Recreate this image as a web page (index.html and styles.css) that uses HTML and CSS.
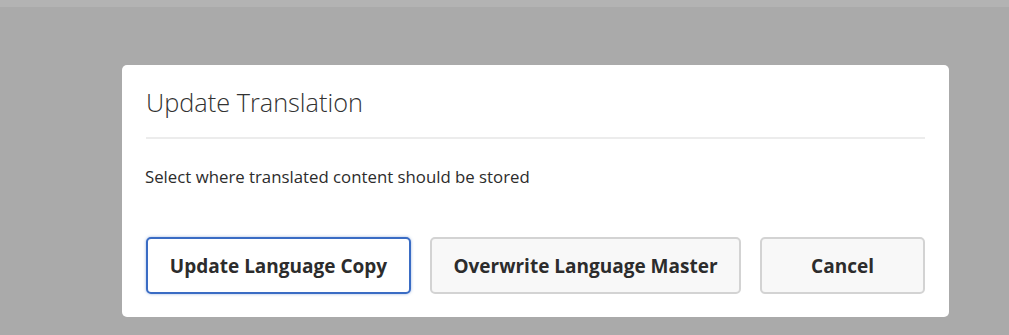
FILE: index.html
```html
<!DOCTYPE html>
<html lang="en">
<head>
    <meta charset="UTF-8">
    <meta name="viewport" content="width=device-width, initial-scale=1.0">
    <title>Update Translation</title>
    <link rel="stylesheet" href="styles.css">
</head>
<body>
    <div class="top-bar"></div>

    <div class="overlay">
        <div class="dialog">
            <h2 class="dialog-title">Update Translation</h2>
            <p class="dialog-text">Select where translated content should be stored</p>
            <div class="dialog-actions">
                <button class="btn btn-primary">Update Language Copy</button>
                <button class="btn btn-overwrite">Overwrite Language Master</button>
                <button class="btn btn-cancel">Cancel</button>
            </div>
        </div>
    </div>
</body>
</html>
```

FILE: styles.css
```css
body {
    font-family: 'Open Sans', sans-serif;
    margin: 0;
    padding: 0;
    background-color: #aaaaaa;
    color: #2c2c2c;
    height: 100vh;
    overflow: hidden;
}

.top-bar {
    height: 7px;
    background-color: #b3b3b3;
}

.overlay {
    padding: 58px 0 0 122px;
}

.dialog {
    width: 827px;
    height: 252px;
    box-sizing: border-box;
    background-color: white;
    border-radius: 5px;
    padding: 19px 24px 0 23px;
    display: flex;
    flex-direction: column;
}

.dialog-title {
    margin: 0 0 0 1px;
    font-size: 25.3px;
    font-weight: 300;
    color: #323232;
    line-height: 36px;
    padding-bottom: 17px;
    border-bottom: 2px solid #ececec;
}

.dialog-text {
    margin: 27px 0 0;
    font-size: 16.8px;
    line-height: 22px;
    color: #2c2c2c;
}

.dialog-actions {
    display: flex;
    gap: 19px;
    margin-top: 49px;
    margin-left: 1px;
}

.btn {
    height: 57px;
    box-sizing: border-box;
    padding: 0;
    border: 2px solid #d3d3d3;
    border-radius: 5px;
    background-color: #f8f8f8;
    font-family: 'Open Sans', sans-serif;
    font-size: 19px;
    font-weight: 700;
    color: #2c2c2c;
    white-space: nowrap;
    cursor: pointer;
}

.btn-primary {
    width: 265px;
    background-color: white;
    border-color: #3a6cc4;
    box-shadow: 0 0 3px rgba(58, 108, 196, 0.5);
}

.btn-overwrite {
    width: 311px;
}

.btn-cancel {
    width: 165px;
}
```
